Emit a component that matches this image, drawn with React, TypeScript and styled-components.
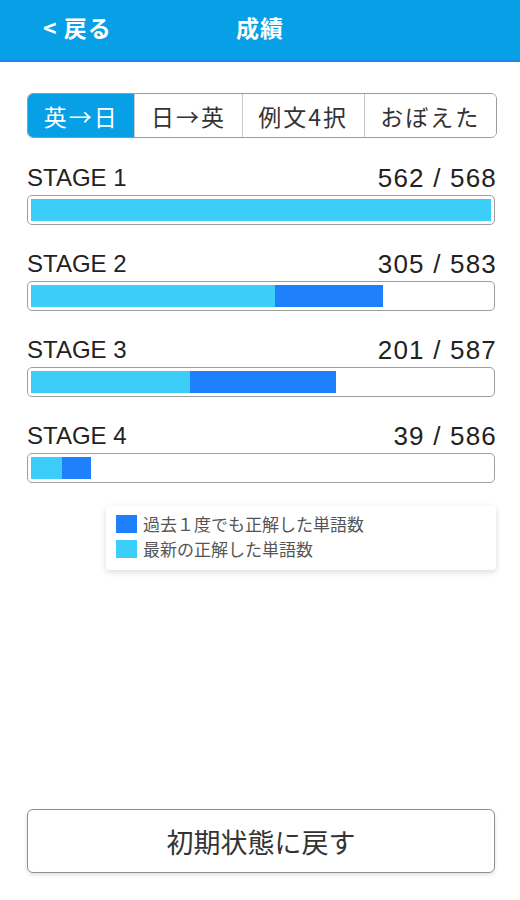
import React from 'react'
import styled, { createGlobalStyle } from 'styled-components'

const GlobalStyle = createGlobalStyle`
  html, body {
    margin: 0;
    padding: 0;
    background: #ffffff;
  }
  body {
    font-family: 'Liberation Sans', 'Noto Sans CJK JP', sans-serif;
    color: #222;
  }
`

const MODES = ['英→日', '日→英', '例文4択', 'おぼえた']

// latest = 最新の正解, ever = 過去１度でも正解
const STAGES = [
  { name: 'STAGE 1', done: 562, total: 568, latest: 568, ever: 568 },
  { name: 'STAGE 2', done: 305, total: 583, latest: 309, ever: 446 },
  { name: 'STAGE 3', done: 201, total: 587, latest: 203, ever: 389 },
  { name: 'STAGE 4', done: 39, total: 586, latest: 40, ever: 76 },
]

const App = () => {
  return (
    <Page>
      <GlobalStyle />
      <Header>
        <Back>&lt; 戻る</Back>
        <Title>成績</Title>
      </Header>
      <Content>
        <Segments>
          {MODES.map((m, i) => (
            <Segment key={m} $active={i === 0}>
              {m}
            </Segment>
          ))}
        </Segments>
        <Stages>
          {STAGES.map((s) => (
            <Stage key={s.name}>
              <StageHead>
                <span>{s.name}</span>
                <Count>
                  {s.done} / {s.total}
                </Count>
              </StageHead>
              <Bar>
                <Track>
                  <Fill $color="#1f80fb" style={{ width: `${(s.ever / s.total) * 100}%` }} />
                  <Fill $color="#3dcdf9" style={{ width: `${(s.latest / s.total) * 100}%` }} />
                </Track>
              </Bar>
            </Stage>
          ))}
        </Stages>
        <Legend>
          <LegendRow>
            <Swatch $color="#1f80fb" />
            過去１度でも正解した単語数
          </LegendRow>
          <LegendRow>
            <Swatch $color="#3dcdf9" />
            最新の正解した単語数
          </LegendRow>
        </Legend>
        <ResetButton type="button">初期状態に戻す</ResetButton>
      </Content>
    </Page>
  )
}

export default App

const Page = styled.div`
  display: flex;
  flex-direction: column;
  min-height: 900px;
`

const Header = styled.header`
  position: relative;
  display: flex;
  align-items: center;
  justify-content: center;

  height: 62px;
  padding-bottom: 6px;
  box-sizing: border-box;
  background-color: #079fe5;
  border-bottom: 2px solid #1b86f2;
  color: #fff;
  font-family: 'Noto Sans CJK JP', sans-serif;
  font-weight: 700;
  font-size: 23px;
`

const Back = styled.div`
  position: absolute;
  left: 43px;
  top: 10px;
  letter-spacing: 1px;
`

const Title = styled.div`
  letter-spacing: 1px;
`

const Content = styled.main`
  display: flex;
  flex: 1;
  flex-direction: column;
  padding: 31px 25px 27px 27px;
`

const Segments = styled.div`
  display: flex;
  height: 45px;
  margin-right: -2px;
  border: 1px solid #9b9b9b;
  border-radius: 6px;
  overflow: hidden;
  box-sizing: border-box;
`

const Segment = styled.div<{ $active: boolean }>`
  display: flex;
  align-items: center;
  justify-content: center;
  flex: 1 1 auto;
  padding: 0 8px;

  background-color: ${({ $active }) => ($active ? '#079fe5' : '#fff')};
  color: ${({ $active }) => ($active ? '#fff' : '#333')};
  border-left: 1px solid #c8c8c8;
  font-family: 'Noto Sans CJK JP', sans-serif;
  font-size: 23px;
  letter-spacing: 2px;

  &:first-child {
    border-left: 0;
  }
`

const Stages = styled.div`
  display: flex;
  flex-direction: column;
  gap: 24px;
  margin-top: 25px;
`

const Stage = styled.div`
  display: flex;
  flex-direction: column;
  gap: 2px;
`

const StageHead = styled.div`
  display: flex;
  justify-content: space-between;
  align-items: center;
  height: 30px;

  color: #222;
  font-size: 24px;
`

const Count = styled.span`
  font-size: 26px;
  letter-spacing: 1.2px;
  margin-right: -2px;
`

const Bar = styled.div`
  height: 30px;
  padding: 3px;
  border: 1px solid #9e9e9e;
  border-radius: 5px;
  box-sizing: border-box;
`

const Track = styled.div`
  position: relative;
  height: 100%;
`

const Fill = styled.div<{ $color: string }>`
  position: absolute;
  top: 0;
  left: 0;
  height: 100%;
  background-color: ${({ $color }) => $color};
`

const Legend = styled.div`
  display: flex;
  flex-direction: column;
  gap: 5px;
  align-self: flex-end;

  width: 390px;
  box-sizing: border-box;
  margin-top: 23px;
  margin-right: -1px;
  padding: 8px 10px 11px;
  border-radius: 4px;
  background: #fff;
  box-shadow: 0 2px 6px rgba(0, 0, 0, 0.15);
`

const LegendRow = styled.div`
  display: flex;
  align-items: center;
  gap: 6px;

  color: #555;
  font-family: 'Noto Sans CJK JP', sans-serif;
  font-size: 17px;
  line-height: 20px;
`

const Swatch = styled.span<{ $color: string }>`
  width: 21px;
  height: 18px;
  background-color: ${({ $color }) => $color};
`

const ResetButton = styled.button`
  margin-top: auto;
  height: 64px;
  width: 100%;
  border: 1px solid #8f8f8f;
  border-radius: 6px;
  background: #fff;
  box-shadow: 0 2px 4px rgba(0, 0, 0, 0.12);

  color: #333;
  font-family: 'Noto Sans CJK JP', sans-serif;
  font-size: 27px;
  cursor: pointer;
`
